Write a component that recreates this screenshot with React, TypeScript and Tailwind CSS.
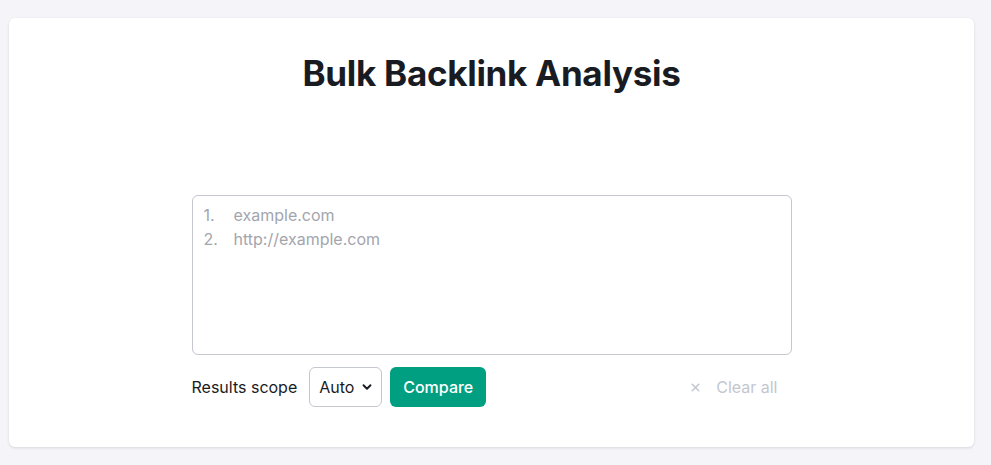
import { X, ChevronDown } from "lucide-react"

export default function App() {
  return (
    <div className="h-[465px] bg-[#f4f4f9] pt-[18px] pl-[9px] font-['Inter',sans-serif]">
      <div className="flex h-[429px] w-[965px] flex-col items-center rounded-md bg-white pt-[33px] shadow-[0_1px_3px_rgba(0,0,0,0.12)]">
        <h1 className="text-[35px] font-bold leading-[44px] tracking-[-0.3px] text-[#191b23]">
          Bulk Backlink Analysis
        </h1>

        <div className="mt-[100px] w-[600px]">
          <div className="h-[160px] rounded-md border border-[#c4c7cf] px-[11px] py-[7px] text-[16px] leading-[24px] text-[#a3a5ad]">
            <div className="flex">
              <span className="w-[30px]">1.</span>
              <span>example.com</span>
            </div>
            <div className="flex">
              <span className="w-[30px]">2.</span>
              <span>http://example.com</span>
            </div>
          </div>

          {/* controls */}
          <div className="mt-[12px] flex items-center">
            <span className="text-[16px] text-[#191b23]">Results scope</span>
            <button className="ml-[12px] flex h-[40px] w-[73px] items-center gap-[6px] rounded-md border border-[#c4c7cf] pl-[9px] text-[16px] text-[#191b23]">
              Auto
              <ChevronDown className="h-[14px] w-[14px]" strokeWidth={3.2} />
            </button>
            <button className="ml-[8px] h-[40px] w-[96px] rounded-md bg-[#009f81] text-[16px] font-medium text-white">
              Compare
            </button>
            <button className="ml-auto mr-[14px] flex items-center gap-[14px] text-[16px] text-[#c4c7cf]">
              <X className="h-[13px] w-[13px]" strokeWidth={3} />
              Clear all
            </button>
          </div>
        </div>
      </div>
    </div>
  )
}
